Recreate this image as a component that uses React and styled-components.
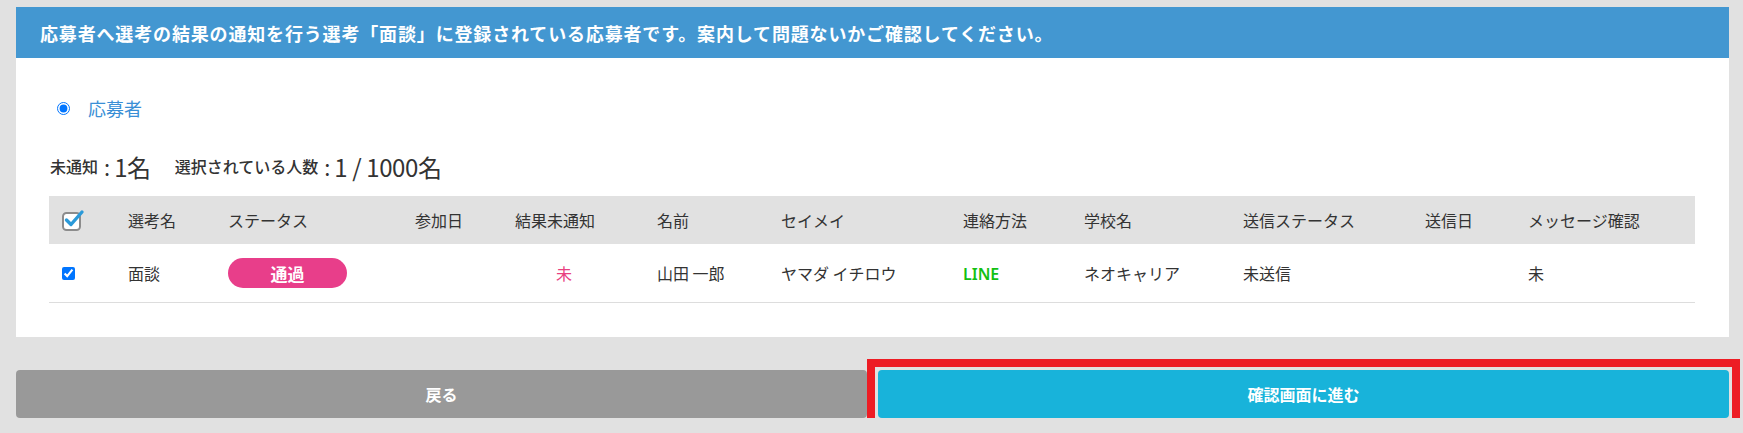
import React from "react";
import styled, { createGlobalStyle } from "styled-components";

const GlobalStyle = createGlobalStyle`
  html, body {
    margin: 0;
    background: #e1e1e1;
    font-family: "Noto Sans CJK JP", "Noto Sans", sans-serif;
    color: #333333;
  }
`;

const columns = [
  { key: "check", width: 66 },
  { key: "selection", label: "選考名", width: 100 },
  { key: "status", label: "ステータス", width: 187 },
  { key: "joined", label: "参加日", width: 100 },
  { key: "unnotified", label: "結果未通知", width: 142 },
  { key: "name", label: "名前", width: 124 },
  { key: "kana", label: "セイメイ", width: 182 },
  { key: "contact", label: "連絡方法", width: 121 },
  { key: "school", label: "学校名", width: 159 },
  { key: "sendStatus", label: "送信ステータス", width: 182 },
  { key: "sentAt", label: "送信日", width: 103 },
  { key: "message", label: "メッセージ確認", width: 180 },
];

export default function App() {
  return (
    <>
      <GlobalStyle />
      <Page>
        <Panel>
          <PanelHeader>
            応募者へ選考の結果の通知を行う選考「面談」に登録されている応募者です。案内して問題ないかご確認してください。
          </PanelHeader>
          <PanelBody>
            <RadioRow>
              <input type="radio" name="target" defaultChecked />
              <span>応募者</span>
            </RadioRow>
            <Counts>
              <small>未通知</small>
              <Colon>:</Colon>
              <big>1名</big>
              <Spacer />
              <small>選択されている人数</small>
              <Colon>:</Colon>
              <big>1 / 1000名</big>
            </Counts>
            <Table>
              <colgroup>
                {columns.map((c) => (
                  <col key={c.key} style={{ width: c.width }} />
                ))}
              </colgroup>
              <thead>
                <tr>
                  <Th>
                    <CheckAllIcon />
                  </Th>
                  {columns.slice(1).map((c) => (
                    <Th key={c.key}>{c.label}</Th>
                  ))}
                </tr>
              </thead>
              <tbody>
                <tr>
                  <Td>
                    <RowCheck type="checkbox" defaultChecked />
                  </Td>
                  <Td>面談</Td>
                  <Td>
                    <StatusBadge>通過</StatusBadge>
                  </Td>
                  <Td />
                  <Td $pad={54}>
                    <Unread>未</Unread>
                  </Td>
                  <Td>山田 一郎</Td>
                  <Td>ヤマダ イチロウ</Td>
                  <Td>
                    <LineText>LINE</LineText>
                  </Td>
                  <Td>ネオキャリア</Td>
                  <Td>未送信</Td>
                  <Td />
                  <Td>未</Td>
                </tr>
              </tbody>
            </Table>
          </PanelBody>
        </Panel>
        <Actions>
          <ActionButton $variant="back">戻る</ActionButton>
          <Highlight>
            <ActionButton $variant="next">確認画面に進む</ActionButton>
          </Highlight>
        </Actions>
      </Page>
    </>
  );
}

const CheckAllIcon = () => (
  <svg width="24" height="22" viewBox="0 0 24 22" style={{ display: "block" }}>
    <rect x="1" y="4" width="17" height="17" rx="3.5" fill="#fff" stroke="#8c8c8c" strokeWidth="2" />
    <path d="M4.5 11 L9 15.5 L20 3" fill="none" stroke="#2b9ad9" strokeWidth="3.4" strokeLinecap="round" strokeLinejoin="round" />
  </svg>
);

const Page = styled.div`
  padding: 7px 14px 0 16px;
`;

const Panel = styled.section`
  background: #ffffff;
`;

const PanelHeader = styled.div`
  height: 51px;
  display: flex;
  align-items: center;
  padding-left: 24px;
  background: #4397d1;
  color: #ffffff;
  font-size: 18px;
  font-weight: 700;
  letter-spacing: 0.84px;
`;

const PanelBody = styled.div`
  padding: 38px 34px 34px 33px;
`;

const RadioRow = styled.label`
  height: 24px;
  display: flex;
  align-items: center;
  gap: 18px;
  padding-left: 8px;
  color: #3a8fd6;
  font-size: 18px;

  input {
    margin: 0;
    width: 13px;
    height: 13px;
  }
`;

const Counts = styled.div`
  margin-top: 30px;
  height: 32px;
  display: flex;
  align-items: center;
  padding-left: 1px;
  color: #333333;

  small {
    font-size: 16px;
    font-weight: 500;
  }
  big {
    font-size: 24px;
    font-weight: 400;
    letter-spacing: -0.4px;
  }
`;

const Colon = styled.span`
  font-size: 22px;
  margin: 0 4px 0 6px;
`;

const Spacer = styled.span`
  width: 24px;
`;

const Table = styled.table`
  margin-top: 14px;
  width: 1646px;
  border-collapse: collapse;
  table-layout: fixed;
  font-size: 16px;
`;

const Th = styled.th`
  height: 48px;
  padding: 0 0 0 13px;
  background: #e1e1e1;
  text-align: left;
  font-weight: 400;
  color: #333333;
`;

const Td = styled.td`
  height: 58px;
  padding: 0 0 0 ${(p) => p.$pad || 13}px;
  border-bottom: 1px solid #dddddd;
  color: #333333;
  white-space: nowrap;
`;

const RowCheck = styled.input`
  margin: 0;
  width: 13px;
  height: 13px;
  display: block;
`;

const StatusBadge = styled.span`
  display: inline-flex;
  align-items: center;
  justify-content: center;
  width: 119px;
  height: 30px;
  border-radius: 15px;
  background: #e83e8a;
  color: #ffffff;
  font-weight: 700;
  font-size: 17px;
`;

const Unread = styled.span`
  color: #e8407f;
`;

const LineText = styled.span`
  color: #12c012;
  font-family: "Noto Sans", sans-serif;
  font-weight: 600;
`;

const Actions = styled.div`
  margin-top: 33px;
  display: grid;
  grid-template-columns: 1fr 1fr;
  gap: 11px;
`;

const Highlight = styled.div`
  outline: 8px solid #ed1c24;
  outline-offset: 3px;
  display: flex;
`;

const ActionButton = styled.button`
  width: 100%;
  height: 48px;
  border: none;
  border-radius: 4px;
  background: ${(p) => (p.$variant === "next" ? "#18b3da" : "#999999")};
  color: #ffffff;
  font-family: "Noto Sans CJK JP", sans-serif;
  font-size: 16px;
  font-weight: 700;
  cursor: pointer;
`;
